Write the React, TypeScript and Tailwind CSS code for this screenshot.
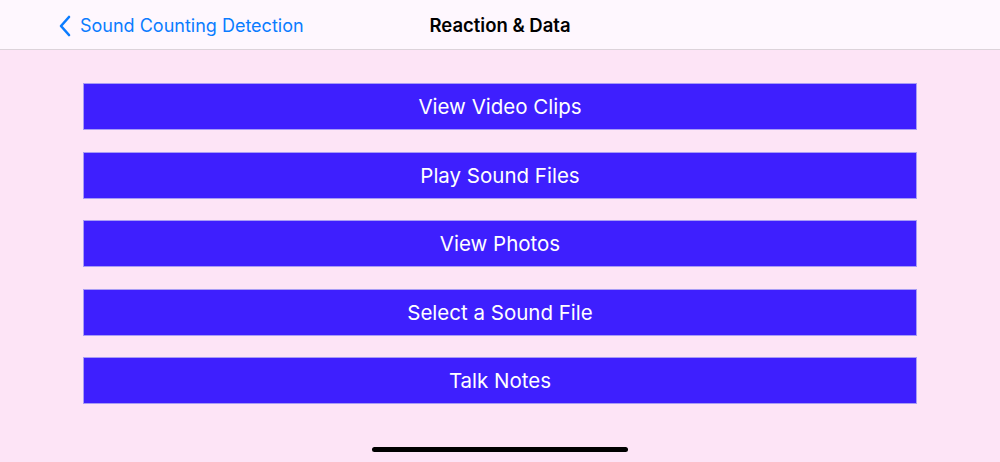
import React from 'react';

const items = ['View Video Clips', 'Play Sound Files', 'View Photos', 'Select a Sound File', 'Talk Notes'];

const App: React.FC = () => {
    return (
        <div
            className="w-[1000px] h-[462px] flex flex-col bg-[#fde4f6] overflow-hidden"
            style={{ fontFamily: 'Inter, "Noto Sans", sans-serif' }}
        >
            <div className="h-[50px] shrink-0 relative flex items-center justify-center pt-[2px] bg-[#fef7fe] border-b border-[#dcd3da]">
                <button className="absolute left-[58px] top-[14px] flex items-center gap-[8px] text-[#0a7cff] text-[18px]">
                    <svg width="14" height="22" viewBox="0 0 14 22" fill="none">
                        <path d="M11 2 L3 11 L11 20" stroke="#0a7cff" strokeWidth="2.6" strokeLinecap="round" strokeLinejoin="round" />
                    </svg>
                    <span className="leading-[24px]">Sound Counting Detection</span>
                </button>
                <div className="text-[18.5px] font-semibold text-black">Reaction &amp; Data</div>
            </div>
            <div className="flex-1 flex flex-col items-center pt-[33px] gap-[21.5px]">
                {items.map((label) => (
                    <button
                        key={label}
                        className="w-[834px] h-[47px] pt-[2px] bg-[#3e1ffe] border border-[#a89cf5] text-white text-[20.5px] flex items-center justify-center"
                    >
                        {label}
                    </button>
                ))}
            </div>
            <div className="h-[15px] shrink-0 flex justify-center">
                <div className="w-[256px] h-[5px] rounded-full bg-black" />
            </div>
        </div>
    );
};

export default App;
